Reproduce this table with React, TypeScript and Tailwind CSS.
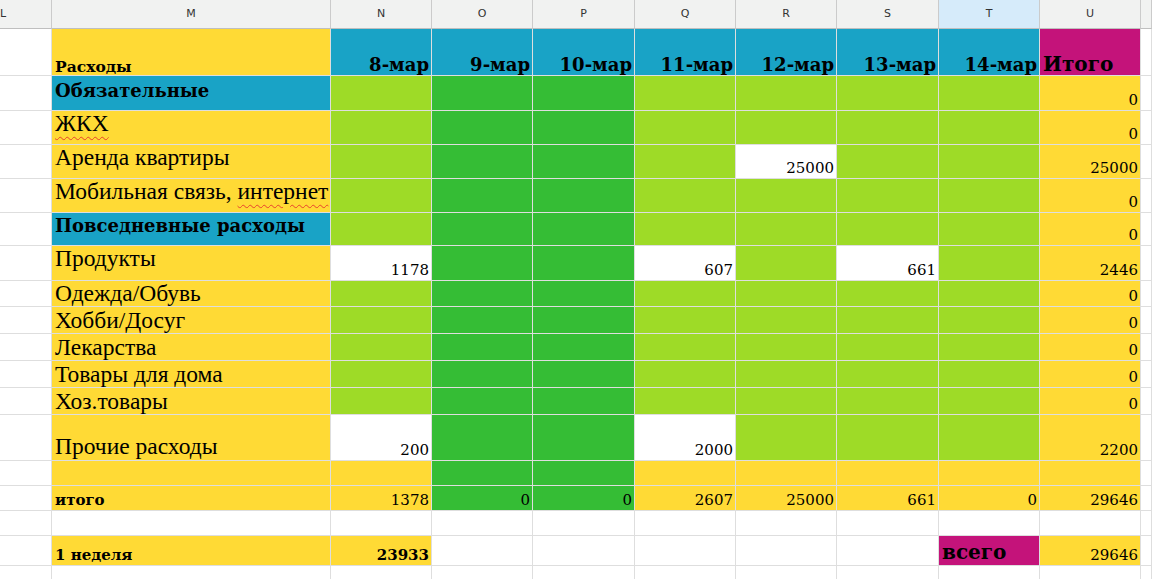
import clsx from "clsx";

const cols = "grid grid-cols-[52px_279px_101px_101px_102px_101px_101px_102px_101px_101px_1fr]";

const Y = "bg-[#ffda35]";
const B = "bg-[#19a3c6]";
const L = "bg-[#9edb27]";
const G = "bg-[#35bd35]";
const W = "bg-white";
const M = "bg-[#c4137a]";

const serif = "font-['Liberation_Serif',serif]";
const dj = "font-['DejaVu_Serif',serif]";

type Day = { bg: string; v?: string; bold?: boolean };

type RowSpec = {
  h: string;
  label?: React.ReactNode;
  labelBg: string;
  labelCls?: string;
  days: Day[];
  total?: string;
  totalBg: string;
};

const pattern = (over: Record<number, string> = {}): Day[] =>
  [L, G, G, L, L, L, L].map((bg, i) => (over[i] ? { bg: W, v: over[i] } : { bg }));

const Squiggle = ({ children }: { children: React.ReactNode }) => (
  <span className="underline decoration-wavy decoration-[#e8412c] decoration-1 underline-offset-[5px]">{children}</span>
);

const reg = `${serif} text-[23.5px] leading-none`;
const bold = `${dj} font-bold text-[18px] leading-none`;

const rows: RowSpec[] = [
  { h: "h-[35px]", label: "Обязательные", labelBg: B, labelCls: `${bold} pb-[10px]`, days: pattern(), total: "0", totalBg: Y },
  { h: "h-[34px]", label: <Squiggle>ЖКХ</Squiggle>, labelBg: Y, labelCls: `${reg} pb-[9px]`, days: pattern(), total: "0", totalBg: Y },
  { h: "h-[34px]", label: "Аренда квартиры", labelBg: Y, labelCls: `${reg} pb-[9px]`, days: pattern({ 4: "25000" }), total: "25000", totalBg: Y },
  {
    h: "h-[34px]",
    label: (
      <>
        Мобильная связь, <Squiggle>интернет</Squiggle>
      </>
    ),
    labelBg: Y,
    labelCls: `${reg} pb-[9px]`,
    days: pattern(),
    total: "0",
    totalBg: Y,
  },
  { h: "h-[33px]", label: "Повседневные расходы", labelBg: B, labelCls: `${bold} pb-[10px]`, days: pattern(), total: "0", totalBg: Y },
  { h: "h-[35px]", label: "Продукты", labelBg: Y, labelCls: `${reg} pb-[10px]`, days: pattern({ 0: "1178", 3: "607", 5: "661" }), total: "2446", totalBg: Y },
  { h: "h-[26px]", label: "Одежда/Обувь", labelBg: Y, labelCls: `${reg} pb-[1px]`, days: pattern(), total: "0", totalBg: Y },
  { h: "h-[27px]", label: "Хобби/Досуг", labelBg: Y, labelCls: `${reg} pb-[1px]`, days: pattern(), total: "0", totalBg: Y },
  { h: "h-[27px]", label: "Лекарства", labelBg: Y, labelCls: `${reg} pb-[1px]`, days: pattern(), total: "0", totalBg: Y },
  { h: "h-[27px]", label: "Товары для дома", labelBg: Y, labelCls: `${reg} pb-[1px]`, days: pattern(), total: "0", totalBg: Y },
  {
    h: "h-[27px]",
    label: (
      <>
        <Squiggle>Хоз</Squiggle>.товары
      </>
    ),
    labelBg: Y,
    labelCls: `${reg} pb-[1px]`,
    days: pattern(),
    total: "0",
    totalBg: Y,
  },
  { h: "h-[46px]", label: "Прочие расходы", labelBg: Y, labelCls: `${reg} pb-[2px]`, days: pattern({ 0: "200", 3: "2000" }), total: "2200", totalBg: Y },
  { h: "h-[25px]", labelBg: Y, days: [Y, G, G, Y, Y, Y, Y].map((bg) => ({ bg })), totalBg: Y },
  {
    h: "h-[25px]",
    label: "итого",
    labelBg: Y,
    labelCls: `${dj} font-bold text-[15px] leading-none pb-[2px]`,
    days: [
      { bg: Y, v: "1378" },
      { bg: G, v: "0" },
      { bg: G, v: "0" },
      { bg: Y, v: "2607" },
      { bg: Y, v: "25000" },
      { bg: Y, v: "661" },
      { bg: Y, v: "0" },
    ],
    total: "29646",
    totalBg: Y,
  },
  { h: "h-[25px]", labelBg: W, days: Array.from({ length: 7 }, () => ({ bg: W })), totalBg: W },
];

const cell = "border-r border-b border-[#dedede] flex items-end overflow-hidden whitespace-nowrap text-black";

function Num({ bg, v, bold: b }: Day) {
  return (
    <div className={clsx(cell, bg, "justify-end pr-[2px] pb-[2px]")}>
      {v && <span className={clsx(dj, "text-[15px] leading-none", b && "font-bold")}>{v}</span>}
    </div>
  );
}

const letters = ["L", "M", "N", "O", "P", "Q", "R", "S", "T", "U", ""];
const dates = ["8-мар", "9-мар", "10-мар", "11-мар", "12-мар", "13-мар", "14-мар"];

export default function App() {
  return (
    <div className="w-[1152px] h-[579px] overflow-hidden bg-white">
      {/* column letters */}
      <div className={clsx(cols, "h-[29px]")}>
        {letters.map((c, i) => (
          <div
            key={i}
            className={clsx(
              "border-r border-b border-r-[#cbcbcb] border-b-[#bfbfbf] flex items-center font-['DejaVu_Sans',sans-serif] text-[11px] text-[#333]",
              c === "T" ? "bg-[#d6ebfa]" : "bg-[#f1f2f1]",
              c === "L" ? "justify-start pl-0" : "justify-center"
            )}
          >
            {c}
          </div>
        ))}
      </div>

      {/* title row */}
      <div className={clsx(cols, "h-[47px]")}>
        <div className={clsx(cell, W)} />
        <div className={clsx(cell, Y, "pl-[3px] pb-[1px]")}>
          <span className={`${dj} font-bold text-[15.5px] leading-none`}>Расходы</span>
        </div>
        {dates.map((d) => (
          <div key={d} className={clsx(cell, B, "justify-end pr-[2px] pb-[1px]")}>
            <span className={`${dj} font-bold text-[18px] leading-none`}>{d}</span>
          </div>
        ))}
        <div className={clsx(cell, M, "pl-[3px] pb-[1px]")}>
          <span className={`${dj} font-bold text-[20px] leading-none`}>Итого</span>
        </div>
        <div className={clsx(cell, W)} />
      </div>

      {rows.map((r, i) => (
        <div key={i} className={clsx(cols, r.h)}>
          <div className={clsx(cell, W)} />
          <div className={clsx(cell, r.labelBg, "pl-[3px]", r.labelCls)}>
            <span>{r.label}</span>
          </div>
          {r.days.map((d, j) => (
            <Num key={j} {...d} />
          ))}
          <Num bg={r.totalBg} v={r.total} />
          <div className={clsx(cell, W)} />
        </div>
      ))}

      {/* week summary */}
      <div className={clsx(cols, "h-[30px]")}>
        <div className={clsx(cell, W)} />
        <div className={clsx(cell, Y, "pl-[3px] pb-[2px]")}>
          <span className={`${dj} font-bold text-[15px] leading-none`}>1 неделя</span>
        </div>
        <Num bg={Y} v="23933" bold />
        <Num bg={W} />
        <Num bg={W} />
        <Num bg={W} />
        <Num bg={W} />
        <Num bg={W} />
        <div className={clsx(cell, M, "pl-[3px] pb-[3px]")}>
          <span className={`${dj} font-bold text-[20px] leading-none`}>всего</span>
        </div>
        <Num bg={Y} v="29646" />
        <div className={clsx(cell, W)} />
      </div>

      <div className={clsx(cols, "h-[30px]")}>
        {Array.from({ length: 11 }, (_, i) => (
          <div key={i} className={clsx(cell, W)} />
        ))}
      </div>
    </div>
  );
}
